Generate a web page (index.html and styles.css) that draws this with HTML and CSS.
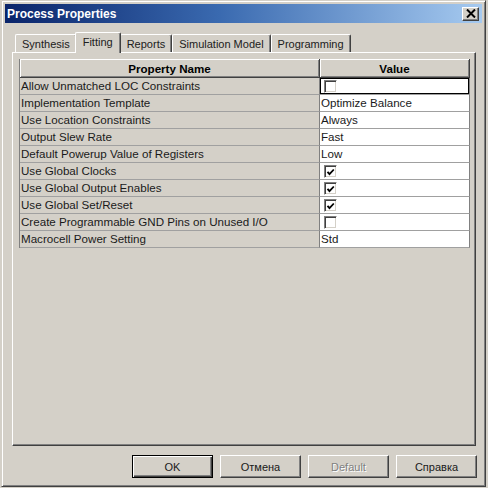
FILE: index.html
```html
<!DOCTYPE html>
<html lang="ru">
<head>
  <meta charset="UTF-8">
  <title>Process Properties</title>
  <link rel="stylesheet" href="styles.css">
</head>
<body>
  <div class="window">
      <div class="titlebar">
          <span class="title">Process Properties</span>
          <div class="close">
              <svg width="10" height="9" viewBox="0 0 10 9">
                  <path d="M1 0.5 L9 8.5 M9 0.5 L1 8.5" stroke="#000" stroke-width="2" fill="none"/>
              </svg>
          </div>
      </div>

      <div class="content">
          <div class="tabs">
              <div class="tab">Synthesis</div>
              <div class="tab active">Fitting</div>
              <div class="tab">Reports</div>
              <div class="tab">Simulation Model</div>
              <div class="tab">Programming</div>
          </div>

          <div class="panel">
              <table class="grid">
                  <thead>
                      <tr>
                          <th class="col-name">Property Name</th>
                          <th class="col-value">Value</th>
                      </tr>
                  </thead>
                  <tbody>
                      <tr>
                          <td class="name">Allow Unmatched LOC Constraints</td>
                          <td class="value focused"><span class="check"></span></td>
                      </tr>
                      <tr>
                          <td class="name">Implementation Template</td>
                          <td class="value">Optimize Balance</td>
                      </tr>
                      <tr>
                          <td class="name">Use Location Constraints</td>
                          <td class="value">Always</td>
                      </tr>
                      <tr>
                          <td class="name">Output Slew Rate</td>
                          <td class="value">Fast</td>
                      </tr>
                      <tr>
                          <td class="name">Default Powerup Value of Registers</td>
                          <td class="value">Low</td>
                      </tr>
                      <tr>
                          <td class="name">Use Global Clocks</td>
                          <td class="value"><span class="check checked"><svg width="9" height="9" viewBox="0 0 9 9"><polyline points="1.5,3.8 3.5,6.2 7.8,1.5" stroke="#000" stroke-width="1.8" fill="none"/></svg></span></td>
                      </tr>
                      <tr>
                          <td class="name">Use Global Output Enables</td>
                          <td class="value"><span class="check checked"><svg width="9" height="9" viewBox="0 0 9 9"><polyline points="1.5,3.8 3.5,6.2 7.8,1.5" stroke="#000" stroke-width="1.8" fill="none"/></svg></span></td>
                      </tr>
                      <tr>
                          <td class="name">Use Global Set/Reset</td>
                          <td class="value"><span class="check checked"><svg width="9" height="9" viewBox="0 0 9 9"><polyline points="1.5,3.8 3.5,6.2 7.8,1.5" stroke="#000" stroke-width="1.8" fill="none"/></svg></span></td>
                      </tr>
                      <tr>
                          <td class="name">Create Programmable GND Pins on Unused I/O</td>
                          <td class="value"><span class="check"></span></td>
                      </tr>
                      <tr>
                          <td class="name">Macrocell Power Setting</td>
                          <td class="value">Std</td>
                      </tr>
                  </tbody>
              </table>
          </div>

          <div class="buttons">
              <button class="btn btn-default">OK</button>
              <button class="btn">Отмена</button>
              <button class="btn" disabled>Default</button>
              <button class="btn">Справка</button>
          </div>
      </div>
  </div>
</body>
</html>
```

FILE: styles.css
```css
* {
    margin: 0;
    padding: 0;
    box-sizing: border-box;
}

body {
    width: 488px;
    height: 488px;
    overflow: hidden;
    background: #d4d0c8;
    font-family: 'Liberation Sans', Arial, sans-serif;
    font-size: 11.6px;
    color: #000;
}

.window {
    width: 485px;
    height: 487px;
    margin-left: 1px;
    border: 1px solid;
    border-color: #d4d0c8 #404040 #404040 #d4d0c8;
    box-shadow: inset 1px 1px #fff, inset -1px -1px #808080;
    padding: 3px 3px 0 3px;
    display: flex;
    flex-direction: column;
}

.titlebar {
    height: 19px;
    background: linear-gradient(to right, #0a246a 0%, #3a6ab0 45%, #a6caf0 100%);
    display: flex;
    align-items: center;
    justify-content: space-between;
    padding: 0 3px 0 2px;
}

.title {
    color: #fff;
    font-weight: bold;
    font-size: 12px;
}

.close {
    width: 17px;
    height: 14px;
    background: #d4d0c8;
    border: 1px solid;
    border-color: #fff #404040 #404040 #fff;
    box-shadow: inset -1px -1px #808080;
    display: flex;
    align-items: center;
    justify-content: center;
}

.content {
    flex: 1;
    padding: 9px 6px 0 7px;
    display: flex;
    flex-direction: column;
}

.tabs {
    height: 20px;
    display: flex;
    align-items: flex-end;
    padding-left: 3px;
    font-size: 11px;
}

.tab {
    height: 18px;
    padding: 0 6px;
    line-height: 19px;
    color: #202020;
    background: #d4d0c8;
    border-top: 1px solid #fff;
    border-left: 1px solid #fff;
    border-right: 1px solid #404040;
    box-shadow: inset -1px 0 #808080;
    border-radius: 2px 2px 0 0;
    white-space: nowrap;
}

.tab.active {
    height: 21px;
    margin: 0 -1px -1px -2px;
    padding: 0 7px 0 7px;
    line-height: 19px;
    position: relative;
    z-index: 2;
}

.panel {
    height: 394px;
    border: 1px solid;
    border-color: #fff #404040 #404040 #fff;
    box-shadow: inset -1px -1px #808080;
    padding: 6px 5px 0 6px;
}

.grid {
    width: 451px;
    border-collapse: separate;
    border-spacing: 0;
    border-left: 1px solid #808080;
    table-layout: fixed;
}

.grid th {
    height: 19px;
    font-weight: bold;
    text-align: center;
    background: #d4d0c8;
    border-right: 1px solid #404040;
    border-bottom: 1px solid #404040;
    box-shadow: inset 1px 1px #fff, inset -1px -1px #808080;
}

.col-name {
    width: 300px;
}

.grid td {
    height: 17px;
    line-height: 16px;
    padding: 0 1px;
    color: #1a1a1a;
    border-bottom: 1px solid #a0a0a0;
    border-right: 1px solid #a0a0a0;
    white-space: nowrap;
    overflow: hidden;
}

.grid td.name {
    background: #d4d0c8;
    border-right-color: #808080;
}

.grid td.value {
    background: #fff;
    border-right-color: #808080;
}

.grid td.focused {
    box-shadow: inset 0 0 0 1px #000;
}

.check {
    display: block;
    width: 13px;
    height: 13px;
    margin-left: 3px;
    background: #fff;
    border: 1px solid;
    border-color: #808080 #fff #fff #808080;
    box-shadow: inset 1px 1px #404040, inset -1px -1px #d4d0c8;
    padding: 1px 0 0 1px;
}

.check svg {
    display: block;
    margin: 1px 0 0 0;
}

.buttons {
    display: flex;
    justify-content: flex-end;
    gap: 7px;
    margin: 9px -1px 0 0;
}

.btn {
    width: 81px;
    height: 23px;
    font-family: 'Liberation Sans', Arial, sans-serif;
    font-size: 11px;
    color: #1a1a1a;
    background: #d4d0c8;
    border: 1px solid;
    border-color: #fff #404040 #404040 #fff;
    box-shadow: inset -1px -1px #808080;
}

.btn-default {
    border-color: #000;
    box-shadow: inset 1px 1px #fff, inset -1px -1px #404040, inset -2px -2px #808080;
}

.btn:disabled {
    color: #808080;
    text-shadow: 1px 1px #fff;
}
```
